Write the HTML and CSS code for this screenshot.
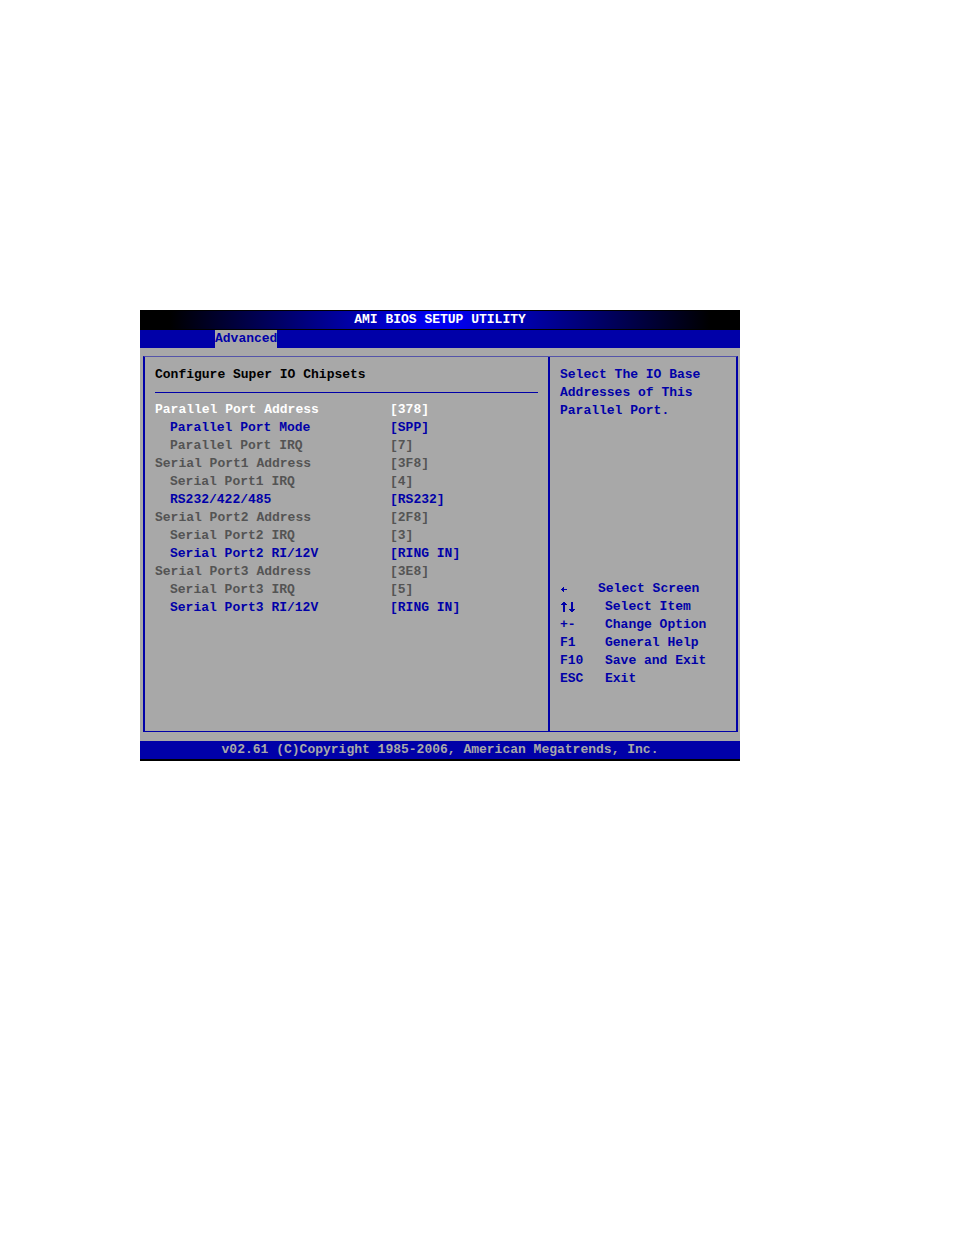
FILE: index.html
```html
<!DOCTYPE html>
<html lang="en">
<head>
<meta charset="utf-8">
<meta name="viewport" content="width=device-width, initial-scale=1">
<title>AMI BIOS SETUP UTILITY</title>
<link rel="stylesheet" href="styles.css">
</head>
<body>
<div class="bios">
  <header class="title-bar"><h1>AMI BIOS SETUP UTILITY</h1></header>
  <nav class="tabs"><a class="tab" href="#advanced">Advanced</a></nav>
  <main class="body" id="advanced">
    <div class="frame">
      <section class="settings">
        <h2>Configure Super IO Chipsets</h2>
        <div class="rows">
          <div class="row selected"><span id="s1">Parallel Port Address</span><button aria-labelledby="s1 v1" id="v1">[378]</button></div>
          <div class="row sub"><span id="s2">Parallel Port Mode</span><button aria-labelledby="s2 v2" id="v2">[SPP]</button></div>
          <div class="row sub off"><span id="s3">Parallel Port IRQ</span><button aria-labelledby="s3 v3" id="v3" disabled>[7]</button></div>
          <div class="row off"><span id="s4">Serial Port1 Address</span><button aria-labelledby="s4 v4" id="v4" disabled>[3F8]</button></div>
          <div class="row sub off"><span id="s5">Serial Port1 IRQ</span><button aria-labelledby="s5 v5" id="v5" disabled>[4]</button></div>
          <div class="row sub"><span id="s6">RS232/422/485</span><button aria-labelledby="s6 v6" id="v6">[RS232]</button></div>
          <div class="row off"><span id="s7">Serial Port2 Address</span><button aria-labelledby="s7 v7" id="v7" disabled>[2F8]</button></div>
          <div class="row sub off"><span id="s8">Serial Port2 IRQ</span><button aria-labelledby="s8 v8" id="v8" disabled>[3]</button></div>
          <div class="row sub"><span id="s9">Serial Port2 RI/12V</span><button aria-labelledby="s9 v9" id="v9">[RING IN]</button></div>
          <div class="row off"><span id="s10">Serial Port3 Address</span><button aria-labelledby="s10 v10" id="v10" disabled>[3E8]</button></div>
          <div class="row sub off"><span id="s11">Serial Port3 IRQ</span><button aria-labelledby="s11 v11" id="v11" disabled>[5]</button></div>
          <div class="row sub"><span id="s12">Serial Port3 RI/12V</span><button aria-labelledby="s12 v12" id="v12">[RING IN]</button></div>
        </div>
      </section>
      <aside class="help">
        <p>Select The IO Base<br>Addresses of This<br>Parallel Port.</p>
        <dl class="keys">
          <div class="key near"><dt>
            <svg class="arrow" viewBox="0 0 8 12" role="img" aria-label="Left"><path d="M1 6h6v1H1zM2 5h2v3H2zM3 4h1v5H3z"/></svg>
          </dt><dd>Select Screen</dd></div>
          <div class="key"><dt>
            <svg class="arrow" viewBox="0 0 8 12" role="img" aria-label="Up"><path d="M3 1h2v10H3zM2 2h4v1H2zM1 3h6v1H1z"/></svg><svg class="arrow" viewBox="0 0 8 12" role="img" aria-label="Down"><path d="M3 1h2v10H3zM1 8h6v1H1zM2 9h4v1H2z"/></svg>
          </dt><dd>Select Item</dd></div>
          <div class="key"><dt>+-</dt><dd>Change Option</dd></div>
          <div class="key"><dt>F1</dt><dd>General Help</dd></div>
          <div class="key"><dt>F10</dt><dd>Save and Exit</dd></div>
          <div class="key"><dt>ESC</dt><dd>Exit</dd></div>
        </dl>
      </aside>
    </div>
  </main>
  <footer class="footer">v02.61 (C)Copyright 1985-2006, American Megatrends, Inc.</footer>
</div>
</body>
</html>
```
FILE: styles.css
```css
:root {
  --blue: #0000a8;
  --gray: #a8a8a8;
  --dim: #545454;
}

* {
  box-sizing: border-box;
}

body {
  margin: 0;
  padding: 310px 214px 40px 140px;
  background: #fff;
  font: bold 13px/18px "Liberation Mono", "DejaVu Sans Mono", monospace;
}

h1, h2, p, dl, dd {
  margin: 0;
  font: inherit;
}

.bios {
  background: var(--gray);
  color: var(--blue);
}

.title-bar {
  border: solid #000;
  border-width: 1px 0;
  background: linear-gradient(to right, #000 5%, #0000f0 48%, #0000f0 52%, #000 95%);
  color: #fff;
  text-align: center;
}

.tabs {
  display: flex;
  padding-left: 75px;
  background: var(--blue);
}

.tab {
  background: var(--gray);
  color: var(--blue);
  text-decoration: none;
}

.body {
  padding: 8px 2px 9px 3px;
}

.frame {
  display: grid;
  grid-template-columns: 1fr 188px;
  min-height: 376px;
  border: 2px solid var(--blue);
  border-top: 1px solid #5454a8;
  border-bottom-width: 1px;
}

.settings {
  padding: 9px 10px;
}

.settings h2 {
  padding-bottom: 8px;
  border-bottom: 1px solid var(--blue);
  color: #000;
}

.rows {
  padding-top: 8px;
}

.row {
  display: grid;
  grid-template-columns: 235px 1fr;
}

.row button {
  padding: 0;
  border: 0;
  background: none;
  color: inherit;
  font: inherit;
  text-align: left;
}

.sub span {
  padding-left: 15px;
}

.selected {
  color: #fff;
}

.off {
  color: var(--dim);
}

.help {
  display: flex;
  flex-direction: column;
  justify-content: space-between;
  padding: 9px 0 43px 10px;
  border-left: 2px solid var(--blue);
}

.key {
  display: grid;
  grid-template-columns: 45px 1fr;
}

.key.near {
  grid-template-columns: 38px 1fr;
}

.key dt {
  display: flex;
  align-items: center;
}

.arrow {
  width: 8px;
  height: 12px;
  fill: currentColor;
  shape-rendering: crispEdges;
}

.footer {
  border-bottom: 2px solid #000;
  background: var(--blue);
  color: var(--gray);
  text-align: center;
}
```
